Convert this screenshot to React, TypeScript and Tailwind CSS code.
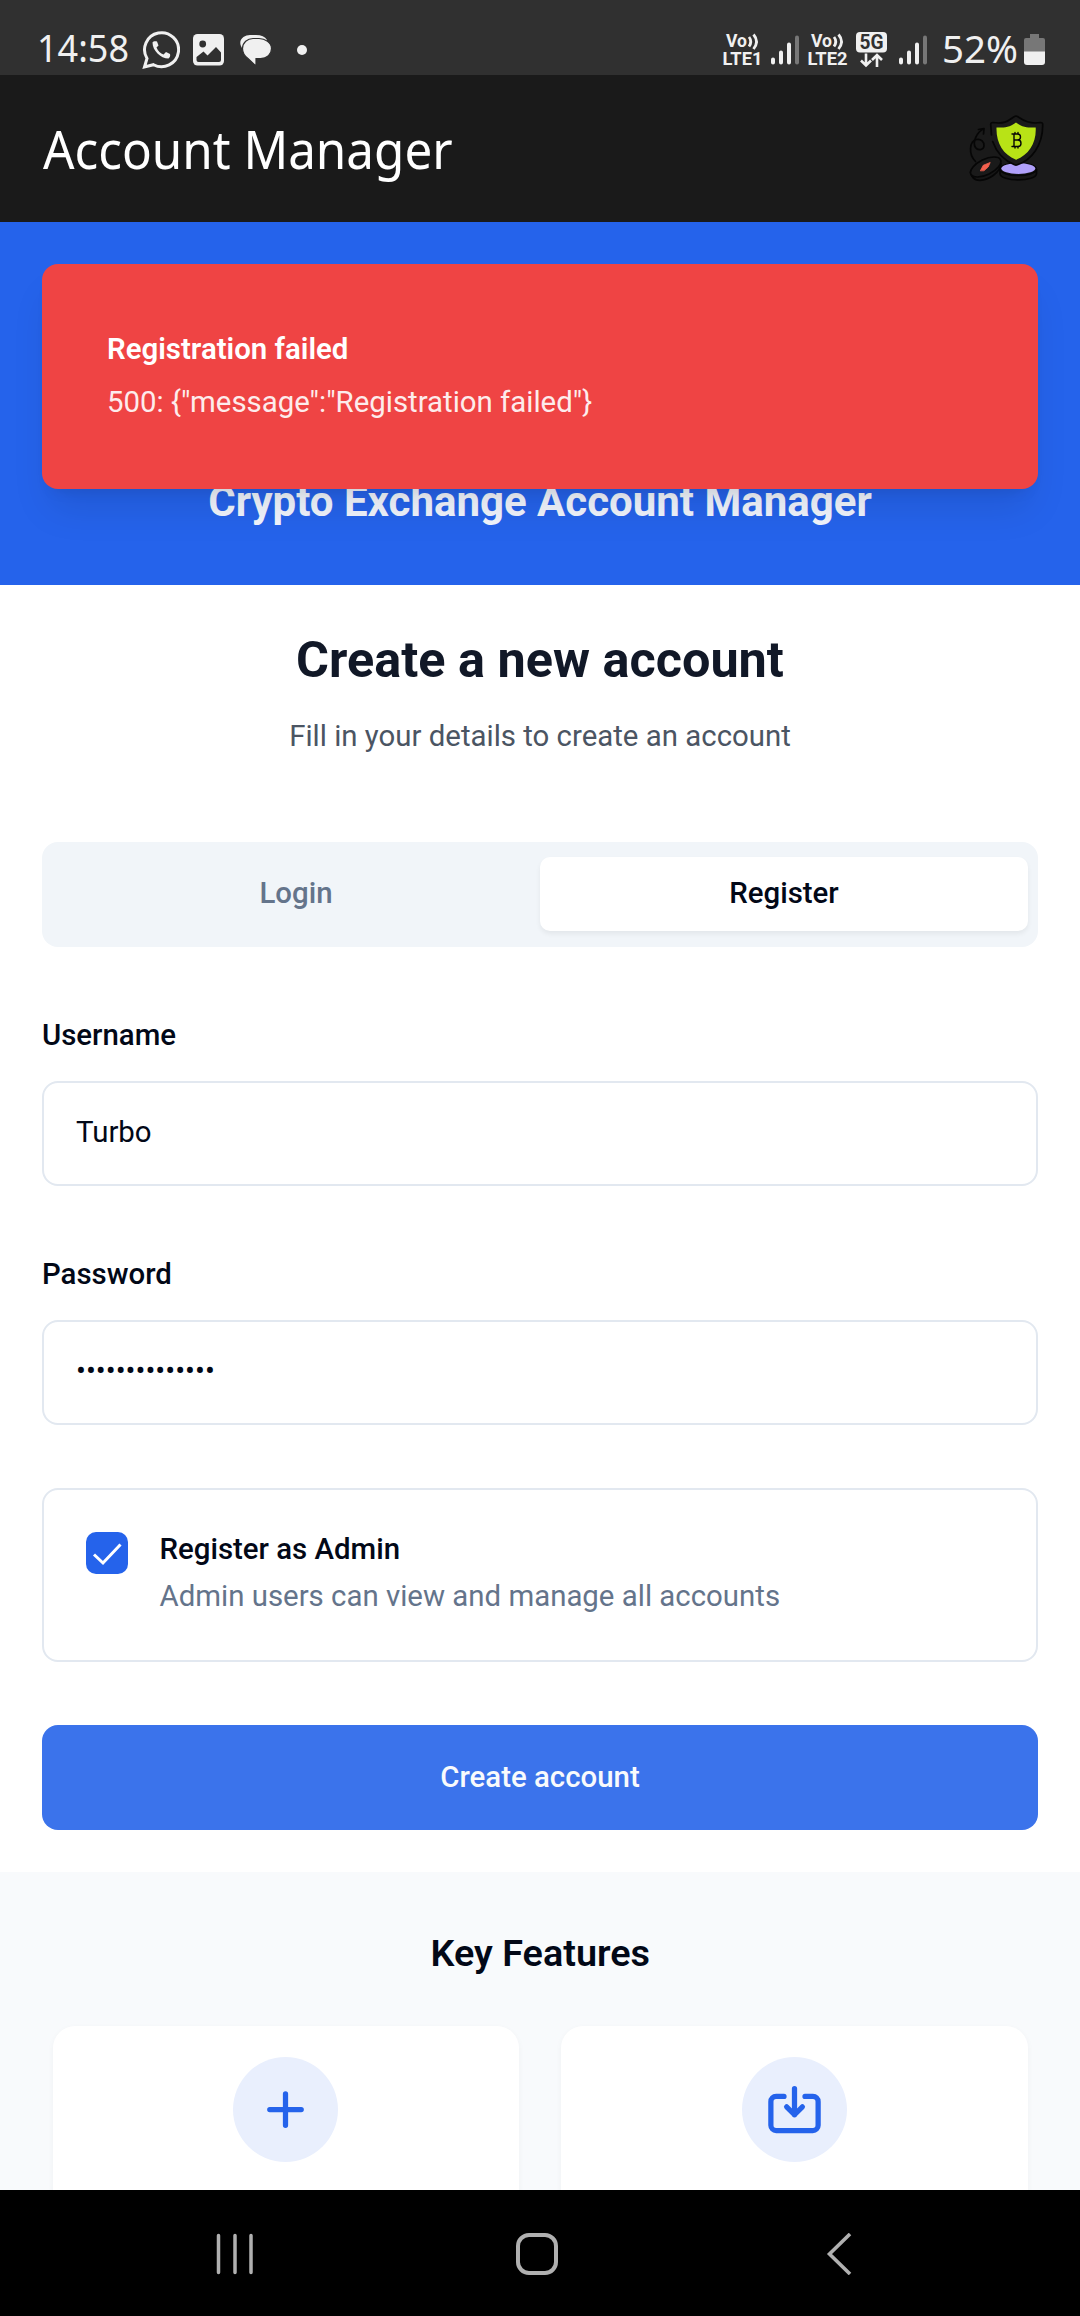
import type { ReactNode } from "react";

const ui = "font-['Noto_Sans',sans-serif]";

function Signal() {
  return (
    <svg width="28" height="32" viewBox="0 0 28 32" className="shrink-0">
      <g stroke="#f0f0f0" strokeWidth="4" strokeLinecap="round">
        <path d="M2 25.500v3M10 18.500v10M18 10.500v18" />
        <path d="M26 3.500v25" stroke="#777" />
      </g>
    </svg>
  );
}

function Volte({ n }: { n: string }) {
  return (
    <svg width="42" height="34" viewBox="0 0 42 34" className="shrink-0 overflow-visible">
      <g fill="#f0f0f0" fontFamily="Roboto, sans-serif" fontWeight="700">
        <text x="3" y="14" fontSize="18" textLength="21" lengthAdjust="spacingAndGlyphs">Vo</text>
        <text x="-0.500" y="32" fontSize="18.500" textLength="40" lengthAdjust="spacingAndGlyphs">LTE{n}</text>
      </g>
      <path d="M26 4q3.500 4.500 0 9.500M30.500 1.500q6 7 0 14.500" fill="none" stroke="#f0f0f0" strokeWidth="2.800" />
    </svg>
  );
}

function StatusBar() {
  return (
    <div className={`flex h-[75px] items-center bg-[#303030] pl-[37px] text-[#f0f0f0] ${ui}`}>
      <svg width="92" height="56" className="mt-[22px] shrink-0 overflow-visible">
        <text x="0" y="41" fontSize="39" fill="#f0f0f0" textLength="92" lengthAdjust="spacingAndGlyphs">14:58</text>
      </svg>
      <svg width="38" height="40" viewBox="0 0 38 40" className="mt-[24px] ml-[13px] shrink-0" fill="none" stroke="#f0f0f0" strokeWidth="3">
        <path d="M2.500 37 5 28.500a17 17 0 1 1 6.500 6.200z" />
        <path d="M10.500 12.500c0 8 8 16 16 16 1.500-1 2-3 1.500-4.500l-4-2-2.500 2.500c-3-1-5.500-3.500-7-7l2-2-1.500-4c-2-.5-4 0-4.500 1z" fill="#f0f0f0" stroke="none" />
      </svg>
      <svg width="31" height="32" viewBox="0 0 31 32" className="mt-[24px] ml-[13px] shrink-0">
        <rect width="31" height="31.500" rx="4.500" fill="#f0f0f0" />
        <circle cx="9.700" cy="10" r="3.400" fill="#303030" />
        <path d="M3.500 23l7-5.500 4 4 8.500-8.500 5 5.500v7.500q0 2-2 2H5.500q-2 0-2-2z" fill="#303030" />
      </svg>
      <svg width="33" height="33" viewBox="0 0 33 33" className="mt-[26px] ml-[15px] shrink-0">
        <path d="M3 14C-2 6 5 1 11 1h6q8 0 11 5v4H5z" fill="#f0f0f0" />
        <path d="M14 4.500h6c6 0 12.500 4 12.500 10s-4.500 10-11 10H17V32l-8-7.500q-5.500-4-5.500-10c0-6 5-10 10.500-10z" fill="#f0f0f0" stroke="#303030" strokeWidth="1.200" />
      </svg>
      <div className="mt-[24px] ml-[25px] size-[10px] rounded-full bg-[#f0f0f0]" />
      <div className="mt-[24px] ml-auto flex items-center pr-[35px]">
        <Volte n="1" />
        <div className="ml-[6px]"><Signal /></div>
        <div className="ml-[9px]"><Volte n="2" /></div>
        <svg width="32" height="36" viewBox="0 0 32 36" className="ml-[6px] shrink-0 overflow-visible">
          <rect x="0" y="0" width="31" height="20.500" rx="4" fill="#f0f0f0" />
          <text x="3.500" y="17.300" fontSize="20" fontWeight="700" fontFamily="Roboto, sans-serif" fill="#303030" textLength="24" lengthAdjust="spacingAndGlyphs">5G</text>
          <path d="M10 21.500v12M5 28.500l5 5 5-5M21 35V23M16 28l5-5 5 5" fill="none" stroke="#f0f0f0" strokeWidth="2.600" />
        </svg>
        <div className="ml-[11px]"><Signal /></div>
        <svg width="76" height="56" className="ml-[15px] shrink-0 overflow-visible">
          <text x="0" y="40.500" fontSize="39" fill="#f0f0f0" textLength="76" lengthAdjust="spacingAndGlyphs">52%</text>
        </svg>
        <svg width="21" height="31" viewBox="0 0 21 31" className="ml-[6px] shrink-0">
          <path d="M6 0h9v4h4q2 0 2 2v12H0V6q0-2 2-2h4z" fill="#777" />
          <path d="M0 17.500h21V28q0 3-3 3H3q-3 0-3-3z" fill="#f0f0f0" />
        </svg>
      </div>
    </div>
  );
}

function Logo() {
  return (
    <svg width="76" height="70" viewBox="0 0 76 70" fill="none" stroke="#060606" strokeWidth="1.700" strokeLinecap="round" strokeLinejoin="round">
      <path d="M6.500 47.500C-1 40 .5 27 7.500 25.500 12 24.500 15.500 28 15 32S9 37 6.500 33.500C3 28 8 18 14.500 15M9.500 15.500l5.500-1-.5 5.500" />
      <path d="M31 55.500v4c0 8.500 36.500 8.500 36.500 0v-4" fill="#161616" />
      <ellipse cx="49.300" cy="55.300" rx="18" ry="6.200" fill="#161616" />
      <ellipse cx="49.300" cy="54.500" rx="17" ry="5.400" fill="#b0a0fa" stroke="none" />
      <path d="M22.500 21 21.700 10.500q0-2 2-2C37 10.500 40 6 45.500 2.500q1.500-1 3 0C54 6 60 10.500 71.700 8.500q2 0 2 2C74 32 62 46 48.500 50.800q-1.500.5-3 0C34 46 27 37 23.700 27.500" fill="#1a1a1a" />
      <path d="M47 8.500C54 14 60 13.500 66.700 13.500 67.500 29 60 40.500 47 45.800 34 40.500 27 29 27.500 13.500 34 13.500 40 14 47 8.500z" fill="#b8e316" stroke="none" />
      <path d="M45 20h3.500q3 0 3 3t-3 3H45h4q3 0 3 3.200t-3 3.300h-4M45 20v12.500M46 18.500v1.500M49 18.500v1.500M46 32.500v1.500M49 32.500v1.500M43 20h2M43 32.500h2" strokeWidth="1.400" />
      <path d="M1.500 58q1.500 8.500 9.500 8.300c9-.5 20-7.500 21-16.500" fill="#161616" />
      <ellipse cx="16.700" cy="53" rx="16.500" ry="7.700" transform="rotate(-26 16.700 53)" fill="#1a1a1a" />
      <path d="M11.500 56.500l2.700-5.200 7-2.800-2 4.500-4 3.500z" fill="#f2604e" stroke="#f2604e" strokeWidth="0.800" />
    </svg>
  );
}

function Field({ label, children }: { label: string; children: ReactNode }) {
  return (
    <div>
      <div className="h-[36px] text-[29.4px] leading-[38px] font-medium">{label}</div>
      <div className="mt-[29px] flex h-[105px] items-center rounded-[16px] border-2 border-[#e2e8f0] px-[32px] pb-[3px] text-[29.4px]">
        {children}
      </div>
    </div>
  );
}

function FeatureCard({ d }: { d: string }) {
  return (
    <div className="flex h-[400px] flex-1 justify-center rounded-[22px] bg-white pt-[31px] shadow-[0_2px_6px_rgba(0,0,0,0.04)]">
      <div className="flex size-[105px] items-center justify-center rounded-full bg-[#e9effd]">
        <svg width="63" height="63" viewBox="0 0 24 24" fill="none" stroke="#2563eb" strokeWidth="2" strokeLinecap="round" strokeLinejoin="round">
          <path d={d} />
        </svg>
      </div>
    </div>
  );
}

export default function App() {
  return (
    <div className="flex h-[2316px] w-[1080px] flex-col overflow-hidden bg-white font-[Roboto,sans-serif] text-[#020817]">
      <StatusBar />
      <header className={`flex h-[147px] items-center justify-between bg-[#1a1a1a] pr-[35px] pl-[43px] text-white ${ui}`}>
        <h1 className="origin-left scale-x-[0.94] text-[52.5px] leading-[72px] whitespace-nowrap">Account Manager</h1>
        <Logo />
      </header>

      <section className="relative h-[363px] shrink-0 bg-[#2563eb]">
        <h2 className="pt-[254px] text-center text-[42px] leading-[52px] font-bold text-[#f1f5fd]">Crypto Exchange Account Manager</h2>
        <div className="absolute inset-x-[42px] top-[42px] h-[225px] rounded-[16px] bg-[#ef4444] pt-[67px] pl-[65px] text-[29.4px] whitespace-nowrap text-white shadow-[0_26px_39px_-8px_rgba(0,0,0,0.1),0_10px_16px_-10px_rgba(0,0,0,0.1)]">
          <div className="leading-[37px] font-semibold">Registration failed</div>
          <div className="mt-[12px] leading-[44px] opacity-90">500: {'{"message":"Registration failed"}'}</div>
        </div>
      </section>

      <main className="flex h-[1287px] shrink-0 flex-col px-[42px]">
        <h2 className="mt-[45px] text-center text-[50.4px] leading-[60px] font-bold text-[#111827]">Create a new account</h2>
        <p className="mt-[24px] text-center text-[29.4px] leading-[44px] text-[#4b5563]">Fill in your details to create an account</p>
        <div className="mt-[84px] flex h-[105px] items-start rounded-[16px] bg-[#f1f5f9] px-[10px] pt-[15px] text-[29.4px] leading-[72px] font-medium">
          <div className="flex-1 text-center text-[#64748b]">Login</div>
          <div className="h-[74px] w-[488px] rounded-[10px] bg-white text-center shadow-[0_3px_5px_rgba(0,0,0,0.06)]">Register</div>
        </div>
        <div className="mt-[69px] flex flex-col gap-[69px]">
          <Field label="Username">Turbo</Field>
          <Field label="Password">••••••••••••••</Field>
        </div>
        <div className="mt-[63px] flex h-[174px] items-start rounded-[16px] border-2 border-[#e2e8f0] pt-[42px] pl-[42px]">
          <div className="flex size-[42px] items-center justify-center rounded-[10px] bg-[#2563eb]">
            <svg width="42" height="42" viewBox="0 0 42 42" fill="none" stroke="#fff" strokeWidth="3">
              <path d="M8 22.500l9 8.500L34.500 12.500" />
            </svg>
          </div>
          <div className="pl-[31.5px] text-[29.4px] whitespace-nowrap">
            <div className="leading-[34px] font-medium">Register as Admin</div>
            <div className="mt-[8px] leading-[44px] text-[#64748b]">Admin users can view and manage all accounts</div>
          </div>
        </div>
        <button className="mt-[63px] h-[105px] rounded-[16px] bg-[#3b73eb] text-[29.4px] font-medium text-[#f8fafc]">Create account</button>
      </main>

      <section className="h-[318px] shrink-0 overflow-hidden bg-[#f8fafc] pr-[52px] pl-[52.5px]">
        <h3 className="mt-[55px] text-center text-[37.8px] leading-[52px] font-semibold">Key Features</h3>
        <div className="mt-[47px] flex gap-[42px]">
          <FeatureCard d="M12 6v6m0 0v6m0-6h6m-6 0H6" />
          <FeatureCard d="M8 7H5a2 2 0 00-2 2v9a2 2 0 002 2h14a2 2 0 002-2V9a2 2 0 00-2-2h-3m-1 4l-3 3m0 0l-3-3m3 3V4" />
        </div>
      </section>

      <nav className="flex h-[126px] shrink-0 items-center bg-black pt-[2px]">
        <svg width="37" height="42" viewBox="0 0 37 42" className="ml-[216px]" stroke="#b0b0b0" strokeWidth="3.500" strokeLinecap="round">
          <path d="M2.500 2.500v37M19 2.500v37M35 2.500v37" />
        </svg>
        <svg width="42" height="42" viewBox="0 0 42 42" className="ml-[263px]" fill="none" stroke="#b0b0b0" strokeWidth="4">
          <rect x="2" y="2" width="38" height="38" rx="11" />
        </svg>
        <svg width="26" height="42" viewBox="0 0 26 42" className="ml-[268px]" fill="none" stroke="#b0b0b0" strokeWidth="3.600">
          <path d="M24 1 3.500 21 24 41" />
        </svg>
      </nav>
    </div>
  );
}
